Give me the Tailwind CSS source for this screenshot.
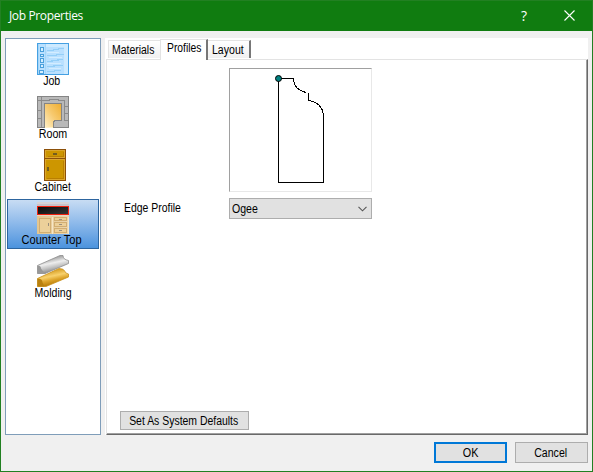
<!DOCTYPE html>
<html lang="en">
<head>
<meta charset="utf-8">
<title>Job Properties</title>
<script src="https://cdn.jsdelivr.net/npm/@tailwindcss/browser@4"></script>
</head>
<body class="overflow-hidden">
<div class="w-[593px] h-[472px] flex flex-col bg-[#f0f0f0] border border-[#228022] font-['Liberation_Sans',Arial,sans-serif] text-[12px] leading-[14px] text-black whitespace-nowrap">
  <header class="h-[30px] shrink-0 flex items-center bg-[#107c10] text-white pl-2">
    <h1 class="flex-1 font-['Open_Sans',sans-serif] text-[12px] tracking-[-0.36px] leading-[16px]">Job Properties</h1>
    <span class="w-[20px] text-center font-['Open_Sans',sans-serif] text-[14px] mr-[30px] -mt-px">?</span>
    <svg class="w-[11px] h-[11px] mr-[17px] -mt-px" viewBox="0 0 11 11" fill="none" stroke="white" stroke-width="1.1"><path d="M.5 .5 10.5 10.5M10.5 .5 .5 10.5"/></svg>
  </header>
  <main class="flex pt-[7px] pl-1 gap-1">
    <nav class="w-[96px] h-[397px] bg-white border border-[#7f9db9] p-px flex flex-col gap-[3px]">
      <div class="h-[50px] border border-transparent flex flex-col items-center pt-[2px]">
        <svg class="w-8 h-8 shrink-0" viewBox="0 0 32 32" shape-rendering="crispEdges">
          <rect x=".5" y=".5" width="31" height="31" fill="#b9e0ff" stroke="#45a0e2"/>
          <path d="M8 1h23v3H8zM27 4h4v27h-4z" fill="#cdeaff"/>
          <path d="M1 1h1v30H1zM8 1h1v30H8z" fill="#a5d6f8"/>
          <g fill="#d5eeff" stroke="#4aa0dc"><rect x="3.500" y="4.500" width="3" height="4"/><rect x="3.500" y="11.500" width="3" height="2"/><rect x="3.500" y="15.500" width="3" height="4"/><rect x="3.500" y="21.500" width="3" height="3"/><rect x="2.500" y="27.500" width="4" height="3"/></g>
          <path d="M10 7.500h7M16 6.500h6M21 5.500h6M10 12.500h10M19 11.500h8M10 18.500h6M14 17.500h8M20 16.500h6M10 23.500h8M16 22.500h10M10 28.500h8M17 27.500h7" stroke="#94cff7"/>
          <path d="M10 9.500h12M12 14.500h13M10 20.500h14M12 25.500h12" stroke="#d3edff"/>
        </svg>
        <span class="block scale-x-[.88] -translate-x-px -mt-px">Job</span>
      </div>
      <div class="h-[50px] border border-transparent flex flex-col items-center pt-[2px]">
        <svg class="w-8 h-8 shrink-0" viewBox="0 0 32 32" shape-rendering="crispEdges">
          <defs><linearGradient id="rm" x1="1" y1="0" x2="0" y2="1"><stop offset="0" stop-color="#efad2e"/><stop offset=".5" stop-color="#f7ca70"/><stop offset="1" stop-color="#fff1c9"/></linearGradient></defs>
          <rect x=".5" y=".5" width="31" height="31" fill="#b9b9b9" stroke="#858585"/>
          <path d="M7.500 31.500V7.500h17v17h-7l-1 2v5z" fill="url(#rm)" stroke="#858585"/>
          <path d="M8 31.500h8" stroke="#fff1c9"/>
          <path d="M4.500 1v30M1 4.500h11M1 14.500h3M1 22.500h3M12.500 5V3.500h9v1h6v20M27.500 10.500H31M27.500 17.500h4M27.500 24.500H31" fill="none" stroke="#8b8b8b"/>
        </svg>
        <span class="block scale-x-[.89] -mt-px">Room</span>
      </div>
      <div class="h-[50px] border border-transparent flex flex-col items-center pt-[2px]">
        <svg class="w-8 h-8 shrink-0" viewBox="0 0 32 32" shape-rendering="crispEdges">
          <rect x="7.500" y=".5" width="21" height="31" fill="#cc9500" stroke="#8c5009"/>
          <path d="M8 9.500h20" stroke="#8c5009"/>
          <rect x="8.500" y="1.500" width="19" height="7" fill="#cd9600" stroke="#dba62c"/>
          <rect x="8.500" y="10.500" width="19" height="20" fill="#cd9600" stroke="#dba62c"/>
          <path d="M10.500 7.500h16v-5M26.500 12v17.500H10" fill="none" stroke="#b97f00"/>
          <path d="M16 4h4v2h-4zM10 18h2v4h-2z" fill="#735c20"/>
        </svg>
        <span class="block scale-x-[.88] -mt-px">Cabinet</span>
      </div>
      <div class="h-[50px] border border-[#2d659f] bg-linear-to-b from-[#c8dcf3] to-[#4b93de] flex flex-col items-center pt-[2px]">
        <svg class="w-8 h-8 shrink-0" viewBox="0 0 32 32" shape-rendering="crispEdges">
          <defs><linearGradient id="ct" x1="0" y1="0" x2="1" y2="0"><stop offset="0" stop-color="#e4c68f"/><stop offset="1" stop-color="#ecd6af"/></linearGradient><linearGradient id="bk" x1="0" y1="0" x2="1" y2="1"><stop offset="0" stop-color="#080808"/><stop offset="1" stop-color="#383838"/></linearGradient></defs>
          <path d="M0 0h32v4H0z" fill="#d6d3d8"/><path d="M0 2h32v2H0z" fill="#c6c2ca"/>
          <path d="M0 14h32v18H0z" fill="url(#ct)"/>
          <rect x=".5" y="4.500" width="31" height="8" fill="url(#bk)" stroke="#f3210d"/>
          <path d="M0 13h32v1H0z" fill="#e6d8c4"/>
          <g fill="#ecd09a" stroke="#d2ae72"><rect x="2.500" y="16.500" width="11" height="14"/><rect x="17.500" y="15.500" width="12" height="3"/><rect x="17.500" y="20.500" width="12" height="4"/><rect x="17.500" y="26.500" width="12" height="4"/></g>
          <path d="M15.500 15v17M31.500 15v17" stroke="#f6e6c6"/><path d="M22 17.500h3M22 22.500h3M22 28.500h3M11.500 21v3" stroke="#9a8e7c"/>
        </svg>
        <span class="block scale-x-[.92] -translate-x-px -mt-px">Counter Top</span>
      </div>
      <div class="h-[50px] border border-transparent flex flex-col items-center pt-[2px]">
        <svg class="w-8 h-8 shrink-0" viewBox="0 0 32 32">
          <defs><linearGradient id="sv" x1=".35" y1=".1" x2=".65" y2=".9"><stop offset=".1" stop-color="#a8a8a8"/><stop offset=".4" stop-color="#ededed"/><stop offset=".65" stop-color="#c4c4c4"/><stop offset=".9" stop-color="#929292"/></linearGradient><linearGradient id="gd" x1=".35" y1=".1" x2=".65" y2=".9"><stop offset=".1" stop-color="#dba52d"/><stop offset=".4" stop-color="#f8d16c"/><stop offset=".65" stop-color="#dda42a"/><stop offset=".9" stop-color="#bd820c"/></linearGradient></defs>
          <path d="M.5 10.500 23 .5h3q0 4 5.500 5v3L8 18.500H.5z" fill="url(#sv)" stroke="#8e8e8e" stroke-width=".8"/>
          <path d="M.5 10.500q3.500 0 3.500 3 1 2.500 5 5H.5z" fill="#989898"/>
          <path d="M.5 23.500 22 13.500q5 0 6 3 .5 2 3.500 2.500V22L9 31.500H.5z" fill="url(#gd)" stroke="#c9901c" stroke-width=".8"/>
          <path d="M.5 23.500q5 0 5 4l2 4h-7z" fill="#b9810f"/>
        </svg>
        <span class="block scale-x-[.88] -mt-px">Molding</span>
      </div>
    </nav>
    <section class="w-[483px] h-[397px] bg-white flex flex-col">
      <div class="h-[21px] pl-[3px] flex items-end">
        <div class="w-[52px] h-[18px] mb-px border-t border-l border-[#e3e3e3] bg-linear-to-b from-white to-[#f0f0f0] pt-px pl-[3px]"><span class="block origin-left scale-x-[.87] pt-px">Materials</span></div>
        <div class="w-[48px] h-[21px] -mb-px z-10 bg-white border-t border-l border-[#e3e3e3] border-r-2 border-r-[#777] pt-px pl-[6px] leading-[15px]"><span class="block origin-left scale-x-[.86]">Profiles</span></div>
        <div class="w-[43px] h-[18px] mb-px border-t border-[#e3e3e3] border-r-2 border-r-[#777] bg-linear-to-b from-white to-[#f0f0f0] pt-px pl-[4px]"><span class="block origin-left scale-x-[.88] pt-px">Layout</span></div>
      </div>
      <div class="h-[376px] ml-[1px] border-t border-l border-t-[#e3e3e3] border-l-[#e3e3e3] border-r border-b border-r-[#696969] border-b-[#696969]">
        <div class="h-full border-r border-b border-[#a0a0a0] flex flex-col pl-[13px]">
          <div class="w-[143px] h-[124px] shrink-0 mt-[8px] ml-[109px] border border-t-[#a0a0a0] border-l-[#a0a0a0] border-r-[#e8e8e8] border-b-[#e8e8e8]">
            <svg class="w-[141px] h-[122px]" viewBox="0 0 141 122" fill="none" stroke="black" shape-rendering="crispEdges">
              <path d="M76 23.500Q64.500 21 63.500 11V9.500H48.500V113.500H93.500V47Q92.500 33.500 78.500 31.500V24"/>
              <circle cx="48.500" cy="9.500" r="3" fill="#008080" shape-rendering="auto"/>
            </svg>
          </div>
          <div class="flex items-center mt-[6px] pl-[4px]">
            <label class="w-[105px] -mt-[2px]"><span class="block origin-left scale-x-[.87]">Edge Profile</span></label>
            <div class="w-[143px] h-[21px] border border-[#adadad] bg-[#e1e1e1] flex items-center justify-between pl-[2px] pr-[4px]"><span class="block origin-left scale-x-[.88]">Ogee</span>
              <svg class="w-[9px] h-[6px]" viewBox="0 0 9 6" fill="none" stroke="#555" stroke-width="1.100"><path d="M.5 .8 4.500 4.800 8.500 .8"/></svg>
            </div>
          </div>
          <button class="mt-auto mb-[3px] w-[129px] h-[19px] border border-[#adadad] bg-[#e1e1e1] leading-[19px] flex justify-center"><span class="block scale-x-[.87] -translate-x-px">Set As System Defaults</span></button>
        </div>
      </div>
    </section>
  </main>
  <footer class="flex justify-end gap-[8px] pt-[7px] pr-[4px]">
    <button class="w-[73px] h-[21px] border-2 border-[#0078d7] bg-[#e1e1e1] leading-[19px] flex justify-center"><span class="block scale-x-[.9]">OK</span></button>
    <button class="w-[73px] h-[21px] border border-[#adadad] bg-[#e1e1e1] leading-[21px] flex justify-center"><span class="block scale-x-[.88] -translate-x-px">Cancel</span></button>
  </footer>
</div>
</body>
</html>
